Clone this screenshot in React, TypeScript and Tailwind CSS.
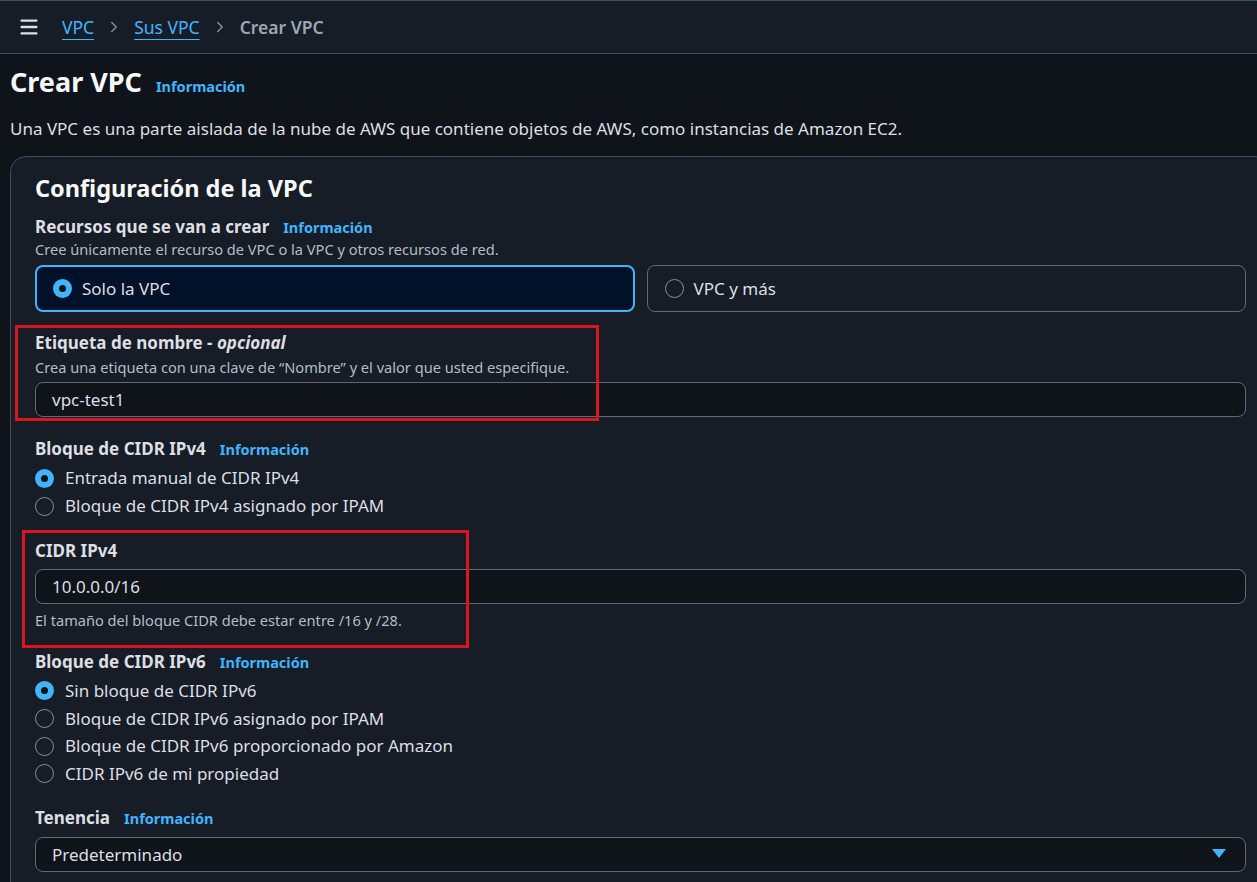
import { Menu, ChevronRight } from "lucide-react";

const font = { fontFamily: '"Noto Sans", "Open Sans", sans-serif' };

function Info() {
  return (
    <a className="text-[14.5px] font-bold text-[#42b4ff] ml-[14px] leading-none">
      Información
    </a>
  );
}

function Dot({ checked }: { checked?: boolean }) {
  return checked ? (
    <span className="w-[19px] h-[19px] rounded-full bg-[#42b4ff] flex items-center justify-center shrink-0">
      <span className="w-[7px] h-[7px] rounded-full bg-[#0f141a]" />
    </span>
  ) : (
    <span className="w-[19px] h-[19px] rounded-full border-[1.5px] border-[#8c8c94] shrink-0" />
  );
}

function Radio({ checked, label }: { checked?: boolean; label: string }) {
  return (
    <div className="flex items-center">
      <Dot checked={checked} />
      <span className="ml-[11px] text-[17px] text-[#dedee3]">{label}</span>
    </div>
  );
}

function Label({ text, info }: { text: React.ReactNode; info?: boolean }) {
  return (
    <div className="flex items-baseline h-6 leading-6">
      <span className="text-[17px] font-bold text-[#dedee3]">{text}</span>
      {info && <Info />}
    </div>
  );
}

function Input({ value }: { value: string }) {
  return (
    <div className="h-[35px] rounded-lg border border-[#656871] bg-[#0f141a] flex items-center px-4 text-[17px] text-[#dedee3]">
      {value}
    </div>
  );
}

export default function App() {
  return (
    <div className="w-[1257px] h-[882px] overflow-hidden bg-[#0f141a] text-[#dedee3]" style={font}>
      {/* top bar */}
      <header className="h-[54px] bg-[#161d26] border-t border-b border-[#414d5c] flex items-center pl-[18px]">
        <Menu size={22} strokeWidth={2.6} className="text-[#dedee3]" />
        <nav className="flex items-center ml-[22px] text-[17.5px]">
          <a className="text-[#42b4ff] underline underline-offset-[5px] decoration-1">VPC</a>
          <ChevronRight size={18} strokeWidth={2} className="text-[#8c8c94] mx-[11px]" />
          <a className="text-[#42b4ff] underline underline-offset-[5px] decoration-1">Sus VPC</a>
          <ChevronRight size={18} strokeWidth={2} className="text-[#8c8c94] mx-[11px]" />
          <span className="text-[#9ba7b6] font-semibold">Crear VPC</span>
        </nav>
      </header>

      <main className="pl-[10px]">
        <div className="flex items-baseline pt-[8px] h-[48px]">
          <h1 className="text-[27px] font-bold text-[#f9f9fa] leading-[40px]">Crear VPC</h1>
          <Info />
        </div>
        <p className="text-[17px] text-[#dedee3] mt-[15px] leading-6">
          Una VPC es una parte aislada de la nube de AWS que contiene objetos de AWS, como instancias de Amazon EC2.
        </p>

        {/* card */}
        <section className="mt-[15px] w-[1261px] bg-[#161d26] border border-[#414d5c] rounded-t-2xl px-6 pt-[15px] pb-10">
          <h2 className="text-[23.5px] font-bold text-[#f9f9fa] leading-8">Configuración de la VPC</h2>

          <div className="mt-[11px]">
            <Label text="Recursos que se van a crear" info />
          </div>
          <p className="text-[14.6px] text-[#b4bcc6] leading-5">
            Cree únicamente el recurso de VPC o la VPC y otros recursos de red.
          </p>
          <div className="grid grid-cols-2 gap-3 mt-[6px]">
            <div className="h-[47px] rounded-lg border-2 border-[#42b4ff] bg-[#001129] flex items-center pl-[16px]">
              <Dot checked />
              <span className="ml-[10px] text-[17px] text-[#dedee3]">Solo la VPC</span>
            </div>
            <div className="h-[47px] rounded-lg border border-[#656871] flex items-center pl-[17px]">
              <Dot />
              <span className="ml-[10px] text-[17px] text-[#dedee3]">VPC y más</span>
            </div>
          </div>

          {/* name tag */}
          <div className="relative mt-[19px]">
            <Label text={<>Etiqueta de nombre - <i>opcional</i></>} />
            <p className="text-[14.6px] text-[#b4bcc6] leading-5 mt-[2px]">
              Crea una etiqueta con una clave de “Nombre” y el valor que usted especifique.
            </p>
            <div className="mt-[5px]">
              <Input value="vpc-test1" />
            </div>
            <div className="absolute left-[-20px] top-[-6px] w-[584px] h-[96px] border-[3px] border-[#d9151d] pointer-events-none" />
          </div>

          {/* ipv4 block */}
          <div className="mt-[20px]">
            <Label text="Bloque de CIDR IPv4" info />
          </div>
          <div className="mt-[3px] [&>div]:h-[28px]">
            <Radio checked label="Entrada manual de CIDR IPv4" />
            <Radio label="Bloque de CIDR IPv4 asignado por IPAM" />
          </div>

          {/* cidr */}
          <div className="relative mt-[19px]">
            <Label text="CIDR IPv4" />
            <div className="mt-[6px]">
              <Input value="10.0.0.0/16" />
            </div>
            <p className="text-[14.6px] text-[#b4bcc6] leading-5 mt-[6px]">
              El tamaño del bloque CIDR debe estar entre /16 y /28.
            </p>
            <div className="absolute left-[-13px] top-[-9px] w-[447px] h-[118px] border-[3px] border-[#d9151d] pointer-events-none" />
          </div>

          {/* ipv6 */}
          <div className="mt-[20px]">
            <Label text="Bloque de CIDR IPv6" info />
          </div>
          <div className="mt-[3px] [&>div]:h-[27.7px]">
            <Radio checked label="Sin bloque de CIDR IPv6" />
            <Radio label="Bloque de CIDR IPv6 asignado por IPAM" />
            <Radio label="Bloque de CIDR IPv6 proporcionado por Amazon" />
            <Radio label="CIDR IPv6 de mi propiedad" />
          </div>

          {/* tenancy */}
          <div className="mt-[18px]">
            <Label text="Tenencia" info />
          </div>
          <div className="mt-[7px] h-[35px] rounded-lg border border-[#656871] bg-[#0f141a] flex items-center justify-between px-4 text-[17px] text-[#dedee3]">
            <span>Predeterminado</span>
            <svg width="14" height="10" viewBox="0 0 14 10" className="mr-[3px]">
              <path d="M0 0 H14 L7 9 Z" fill="#42b4ff" />
            </svg>
          </div>
        </section>
      </main>
    </div>
  );
}
